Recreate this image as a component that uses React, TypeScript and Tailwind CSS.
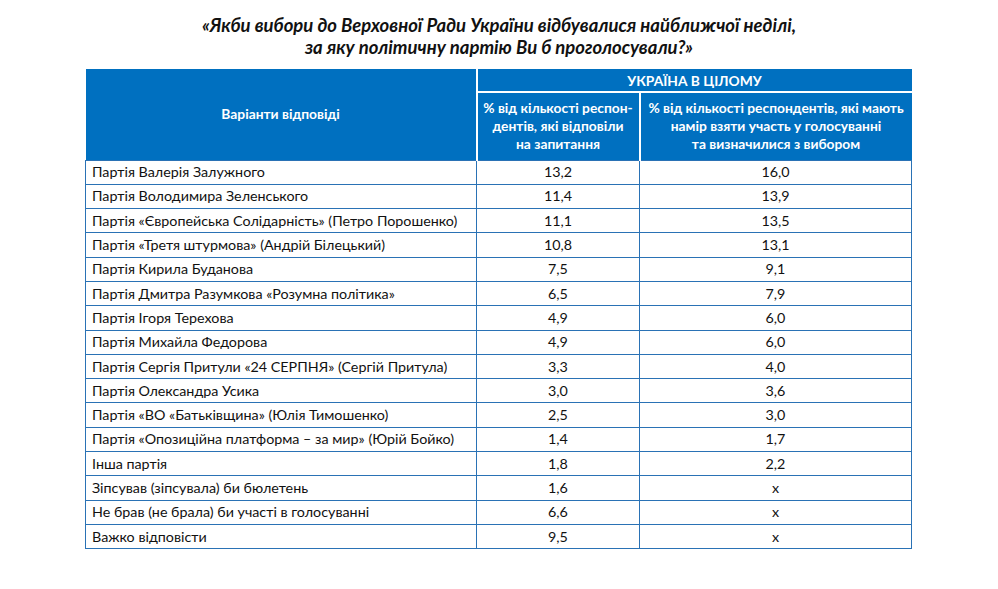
const rows: [string, string, string][] = [
  ["Партія Валерія Залужного", "13,2", "16,0"],
  ["Партія Володимира Зеленського", "11,4", "13,9"],
  ["Партія «Європейська Солідарність» (Петро Порошенко)", "11,1", "13,5"],
  ["Партія «Третя штурмова» (Андрій Білецький)", "10,8", "13,1"],
  ["Партія Кирила Буданова", "7,5", "9,1"],
  ["Партія Дмитра Разумкова «Розумна політика»", "6,5", "7,9"],
  ["Партія Ігоря Терехова", "4,9", "6,0"],
  ["Партія Михайла Федорова", "4,9", "6,0"],
  ["Партія Сергія Притули «24 СЕРПНЯ» (Сергій Притула)", "3,3", "4,0"],
  ["Партія Олександра Усика", "3,0", "3,6"],
  ["Партія «ВО «Батьківщина» (Юлія Тимошенко)", "2,5", "3,0"],
  ["Партія «Опозиційна платформа – за мир» (Юрій Бойко)", "1,4", "1,7"],
  ["Інша партія", "1,8", "2,2"],
  ["Зіпсував (зіпсувала) би бюлетень", "1,6", "x"],
  ["Не брав (не брала) би участі в голосуванні", "6,6", "x"],
  ["Важко відповісти", "9,5", "x"],
];

export default function App() {
  return (
    <div className="w-[998px] h-[589px] bg-white font-['Lato','Open_Sans',sans-serif] text-black">
      <h1 className="pt-[14px] text-center text-[18.5px] leading-[22px] font-bold italic text-[#111]">
        «Якби вибори до Верховної Ради України відбувалися найближчої неділі,
        <br />
        за яку політичну партію Ви б проголосували?»
      </h1>
      <table className="mt-[11px] ml-[85px] w-[826px] border-collapse table-fixed">
        <colgroup>
          <col className="w-[391px]" />
          <col className="w-[163px]" />
          <col className="w-[272px]" />
        </colgroup>
        <thead className="bg-[#0070c0] text-white font-bold text-[13.8px]">
          <tr className="h-[23px]">
            <th
              rowSpan={2}
              className="border-r-2 border-white font-bold text-center"
            >
              Варіанти відповіді
            </th>
            <th colSpan={2} className="border-b-2 border-white font-bold leading-[15px]">
              УКРАЇНА В ЦІЛОМУ
            </th>
          </tr>
          <tr className="h-[68px]">
            <th className="border-r-2 border-white font-bold leading-[18px] px-1">
              % від кількості респон-
              <br />
              дентів, які відповіли
              <br />
              на запитання
            </th>
            <th className="font-bold leading-[18px] px-1">
              % від кількості респондентів, які мають
              <br />
              намір взяти участь у голосуванні
              <br />
              та визначилися з вибором
            </th>
          </tr>
        </thead>
        <tbody className="text-[14.3px] text-[#111]">
          {rows.map(([name, a, b]) => (
            <tr key={name} className="h-[24.3px]">
              <td className="border border-[#2a72b5] pl-[6px] py-0 leading-[16px]">
                {name}
              </td>
              <td className="border border-[#2a72b5] text-center leading-[16px]">
                {a}
              </td>
              <td className="border border-[#2a72b5] text-center leading-[16px]">
                {b}
              </td>
            </tr>
          ))}
        </tbody>
      </table>
    </div>
  );
}
